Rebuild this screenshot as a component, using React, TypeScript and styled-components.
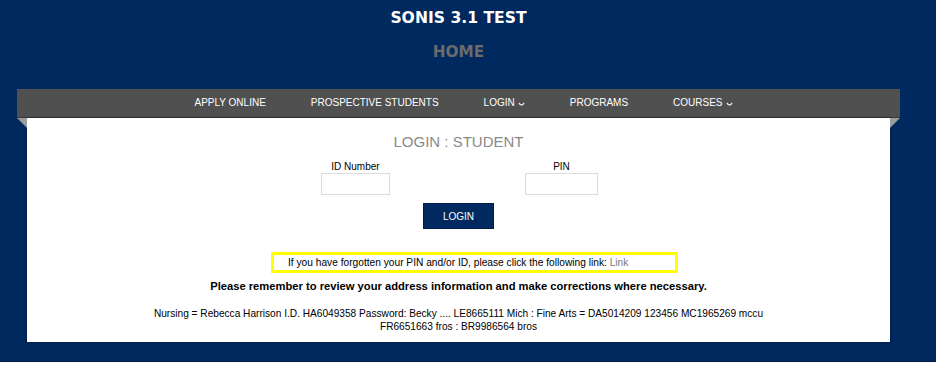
import {FC} from 'react'
import styled, {createGlobalStyle} from 'styled-components'

const blue = '#00295f'

const GlobalStyle = createGlobalStyle`
  html, body {
    margin: 0;
    padding: 0;
    background: #ffffff;
    font-family: "Liberation Sans", Arial, sans-serif;
  }
`

const Page = styled.div`
  background: ${blue};
  padding: 9px 36px 19px 17px;
  border-bottom: 1px solid #001a42;
`

const SiteTitle = styled.h1`
  margin: 0;
  text-align: center;
  font-family: "DejaVu Sans", Verdana, sans-serif;
  font-size: 15.6px;
  line-height: 18px;
  font-weight: bold;
  color: #ffffff;
`

const PageTitle = styled.h2`
  margin: 16px 0 28px;
  text-align: center;
  font-family: "DejaVu Sans", Verdana, sans-serif;
  font-size: 15.3px;
  line-height: 18px;
  font-weight: bold;
  color: #6b6b6b;
`

const Nav = styled.nav`
  height: 28px;
  background: #505050;
  border-bottom: 1px solid #3a3a3a;
  display: flex;
  justify-content: center;
  align-items: center;
  gap: 45px;
  padding-left: 10px;
`

const NavItem = styled.span`
  display: flex;
  align-items: center;
  gap: 3px;
  font-size: 10px;
  line-height: 28px;
  color: #ffffff;
  text-transform: uppercase;
  white-space: nowrap;
`

const Chevron = () => (
  <svg width="7" height="5" viewBox="0 0 7 5" style={{marginTop: 3}}>
    <path d="M1.2 1.3 C2.5 3.4 4.5 3.4 5.8 1.3" fill="none" stroke="#e8e8e8" strokeWidth="1.3" strokeLinecap="round" />
  </svg>
)

const PanelWrap = styled.div`
  position: relative;
  margin: 0 10px;
  background: #ffffff;
  box-shadow: 0 0 2px rgba(0, 0, 0, 0.6);
  padding: 15px 0 9px;
  text-align: center;

  &::before, &::after {
    content: '';
    position: absolute;
    top: 0;
    border-top: 10px solid #9c9c9c;
  }

  &::before {
    left: -10px;
    border-left: 10px solid transparent;
  }

  &::after {
    right: -10px;
    border-right: 10px solid transparent;
  }
`

const Heading = styled.div`
  font-size: 15px;
  line-height: 17px;
  color: #8a8a8a;
  margin-bottom: 11px;
`

const Fields = styled.div`
  display: flex;
  justify-content: center;
  gap: 106px;
`

const Field = styled.label`
  width: 100px;
  display: flex;
  flex-direction: column;
  align-items: center;
  font-size: 10px;
  line-height: 12px;
  color: #000000;
`

const Input = styled.input<{w: number}>`
  box-sizing: border-box;
  width: ${p => p.w}px;
  height: 22px;
  margin: 0;
  border: 1px solid #dcdcdc;
  outline: none;
  background: #ffffff;
`

const LoginButton = styled.button`
  margin: 8px auto 0;
  display: block;
  width: 71px;
  height: 26px;
  background: ${blue};
  border: 1px solid #001c45;
  color: #ffffff;
  font-family: "Liberation Sans", Arial, sans-serif;
  font-size: 10px;
  cursor: pointer;
`

const NoticeRow = styled.div`
  margin-top: 23px;
  display: flex;
  justify-content: center;
  padding-left: 32px;
`

const Notice = styled.div`
  box-sizing: border-box;
  width: 407px;
  height: 21px;
  border: 3px solid #ffff00;
  padding-left: 14px;
  text-align: left;
  font-size: 10.2px;
  line-height: 15px;
  color: #000000;
`

const Link = styled.a`
  color: #777777;
  text-decoration: none;
`

const Reminder = styled.div`
  margin-top: 6px;
  font-size: 11.2px;
  line-height: 14px;
  font-weight: bold;
  color: #000000;
`

const Info = styled.div`
  margin-top: 14px;
  font-size: 10.15px;
  line-height: 13px;
  color: #000000;
`

const Label: FC<{text: string, w: number}> = ({text, w}) => (
  <Field>
    {text}
    <Input w={w} />
  </Field>
)

export default function App() {
  return (
    <>
      <GlobalStyle />
      <Page>
        <SiteTitle>SONIS 3.1 TEST</SiteTitle>
        <PageTitle>HOME</PageTitle>
        <Nav>
          <NavItem>Apply Online</NavItem>
          <NavItem>Prospective Students</NavItem>
          <NavItem>Login <Chevron /></NavItem>
          <NavItem>Programs</NavItem>
          <NavItem>Courses <Chevron /></NavItem>
        </Nav>
        <PanelWrap>
          <Heading>LOGIN : STUDENT</Heading>
          <Fields>
            <Label text="ID Number" w={69} />
            <Label text="PIN" w={73} />
          </Fields>
          <LoginButton>LOGIN</LoginButton>
          <NoticeRow>
            <Notice>
              If you have forgotten your PIN and/or ID, please click the following link: <Link href="#">Link</Link>
            </Notice>
          </NoticeRow>
          <Reminder>Please remember to review your address information and make corrections where necessary.</Reminder>
          <Info>
            Nursing = Rebecca Harrison I.D. HA6049358 Password: Becky .... LE8665111 Mich : Fine Arts = DA5014209 123456 MC1965269 mccu
            <br />
            FR6651663 fros : BR9986564 bros
          </Info>
        </PanelWrap>
      </Page>
    </>
  )
}
